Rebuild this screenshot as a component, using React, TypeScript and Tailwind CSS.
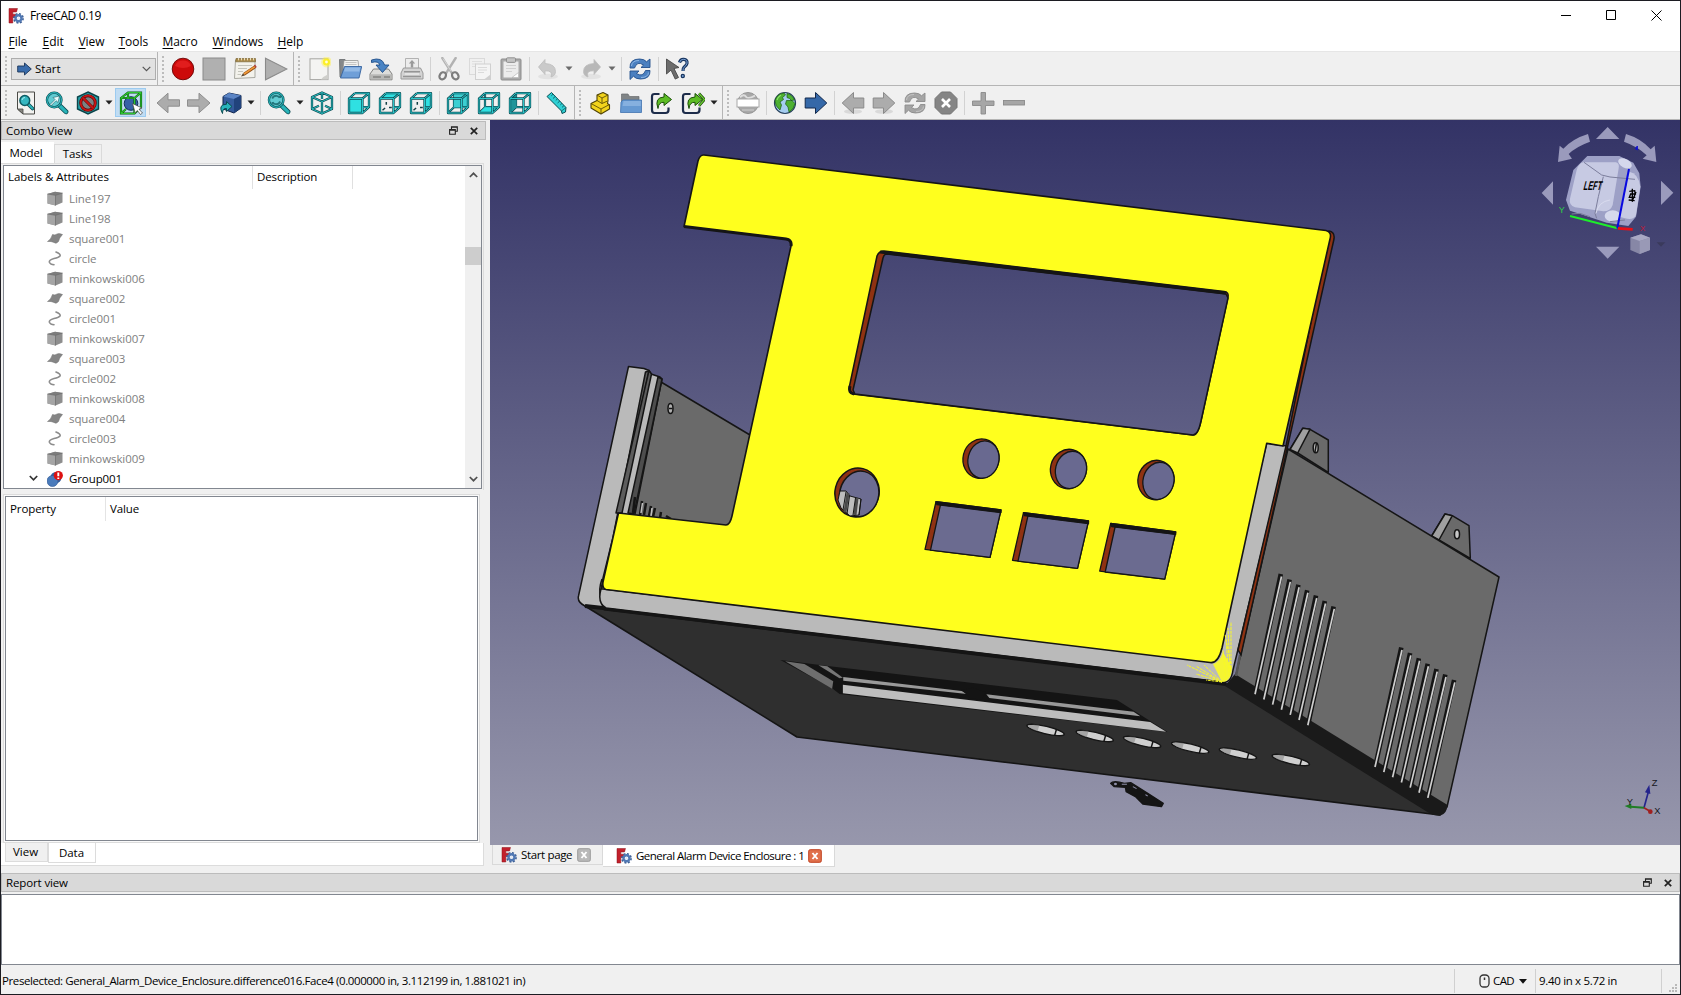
import React from "react";

/* ---------- small drawing helpers ---------- */

type SvgProps = { children: React.ReactNode; size?: number; box?: string };

const Svg = ({ children, size = 24, box = "0 0 24 24" }: SvgProps) => (
  <svg width={size} height={size} viewBox={box} className="block shrink-0" fill="none">
    {children}
  </svg>
);

const FreeCadLogo = () => (
  <Svg size={16} box="0 0 16 16">
    <path d="M1 0.5h8.5l-1 3.5H4.8v2.2h3v3.4h-3V15H1z" fill="#c2202c" stroke="#8a1018" strokeWidth=".5" />
    <circle cx="10.5" cy="10.3" r="4.6" stroke="#3d5f94" strokeWidth="1.6" strokeDasharray="2 1.6" />
    <circle cx="10.5" cy="10.3" r="3" stroke="#5078b4" strokeWidth="2.4" />
    <circle cx="10.5" cy="10.3" r="1.2" fill="#dfe8f5" />
  </Svg>
);

const edges =
  "M2 7.5H15.5V22H2z M8 2.2H22V16.2H15.5 M2 7.5L8 2.2 M15.5 7.5L22 2.2 M15.5 22L22 16.2";
const hidden = "M8 2.2V16.2H15.5 M8 16.2L2 22";

const CubeFrame = ({
  face,
  faceFill = "#2fe0e2",
  back = false,
  ticks = false,
}: {
  face?: string;
  faceFill?: string;
  back?: boolean;
  ticks?: boolean;
}) => (
  <Svg>
    {back && <path d={hidden} stroke="#0c4b52" strokeWidth="2.2" />}
    {back && <path d={hidden} stroke="#2aaeb4" strokeWidth=".9" />}
    {face && <path d={face} fill={faceFill} />}
    {ticks && <path d="M4.5 19.2l2.600-2.200M8.300 11v2.800M11 16.500h2.800" stroke="#123f44" strokeWidth="1.5" />}
    <path d={edges} stroke="#0c4b52" strokeWidth="2.3" strokeLinejoin="round" />
    <path d={edges} stroke="#2cc6ca" strokeWidth="1" />
  </Svg>
);

const faces = {
  front: "M2 7.5H15.5V22H2z",
  top: "M2 7.5L8 2.2H22L15.5 7.5z",
  right: "M15.5 7.5L22 2.2V16.2L15.5 22z",
  rear: "M8 2.2H22V16.2H8z",
  bottom: "M2 22L8 16.2H22L15.5 22z",
  left: "M2 7.5L8 2.2V16.2L2 22z",
};

const IsoCube = () => (
  <Svg>
    {["#0c4b52", "#2cc6ca"].map((c, i) => (
      <path
        key={c}
        d="M12 1.5L22 6V18L12 22.5L2 18V6z M2 6L12 10.5L22 6 M12 10.5V22.5 M12 1.5V8 M2 18L9 14.8 M22 18L15 14.8"
        stroke={c}
        strokeWidth={i ? 0.9 : 2.3}
        strokeLinejoin="round"
      />
    ))}
  </Svg>
);

const Magnifier = ({ inner }: { inner?: React.ReactNode }) => (
  <Svg>
    <path d="M13.5 13.5L21 20.8" stroke="#0c4b52" strokeWidth="4.8" strokeLinecap="round" />
    <path d="M13.5 13.5L21 20.8" stroke="#28b3b8" strokeWidth="3.200" strokeLinecap="round" />
    <circle cx="9.2" cy="9" r="7.3" fill="#62cbd2" stroke="#0c4b52" strokeWidth="2.3" />
    <circle cx="9.2" cy="9" r="7.3" stroke="#28b3b8" strokeWidth="1.2" />
    {inner}
  </Svg>
);

const RedCircle = () => (
  <Svg>
    <circle cx="12" cy="12" r="10.8" fill="#cc0a0a" stroke="#6b0606" strokeWidth=".9" />
    <path d="M4 9a8.6 8.6 0 0 1 16 0q-8 4-16 0z" fill="#ee2a2a" opacity=".6" />
  </Svg>
);
const GreySquare = () => (
  <Svg>
    <rect x="1" y="1" width="22" height="22" fill="#b0b0b0" stroke="#8a8a8a" />
  </Svg>
);
const NotePencil = () => (
  <Svg>
    <path d="M2.5 3H22V20.5L1.500 21.500z" fill="#f3f2ec" stroke="#a0a098" strokeWidth=".9" />
    <path d="M3 1.500H22.500V4.800H2.700z" fill="#a98a4a" stroke="#6e5a2c" strokeWidth=".6" />
    <path d="M5.500 .8v2.500M8.500 .8v2.500M11.500 .8v2.500M14.500 .8v2.500M17.500 .8v2.500M20.500 .8v2.500" stroke="#efe6cc" strokeWidth=".9" />
    <path d="M5 8.5H19M5 11.5H14M5 14.5H10M4.500 17.5H8" stroke="#c4c4bc" />
    <path d="M11 17.2L22.500 9.500" stroke="#8e4a12" strokeWidth="3" />
    <path d="M11 17L22 9.700" stroke="#f09a3a" strokeWidth="1.600" />
    <path d="M8 19.500l2-3.200 1.900 2.300z" fill="#5a4630" />
    <path d="M21.500 8l1.600 2.400" stroke="#b04040" strokeWidth="1.600" />
  </Svg>
);
const Play = () => (
  <Svg>
    <path d="M1.5 1.2L23 12L1.5 22.8z" fill="#b0b0b0" stroke="#8a8a8a" strokeWidth="1.1" />
  </Svg>
);
const NewDoc = () => (
  <Svg>
    <rect x="3" y="1.8" width="18" height="20.8" fill="#f4f4f2" stroke="#a6a6a2" />
    <path d="M14 22.5q2-3 6.8-5V22.5z" fill="#cfcfcb" />
    <circle cx="19.5" cy="5" r="5.4" fill="#fff04a" opacity=".45" />
    <circle cx="19.5" cy="5" r="3.6" fill="#fdf01c" opacity=".9" />
    <circle cx="19.5" cy="5" r="1.4" fill="#fffde0" />
  </Svg>
);
const OpenDoc = () => (
  <Svg>
    <path d="M1.5 2.500H7l1.5 1.8H18V20H2z" fill="#85888a" stroke="#66696b" strokeWidth=".8" />
    <path d="M6 3.500H20l1 9H5z" fill="#f2f2f0" stroke="#8d8d8b" strokeWidth=".7" />
    <path d="M7.5 5.500h11M7.5 7.500h11" stroke="#c5c5c3" />
    <path d="M6.500 9.500h17.200L21 21H2.500z" fill="#6f9fd8" stroke="#35639f" strokeWidth=".9" />
    <path d="M7.200 10.6H22.300l-1 4H6z" fill="#93bae6" />
  </Svg>
);
const SaveDoc = () => (
  <Svg>
    <path d="M4.5 12h15L23 17v5.8H1V17z" fill="#dcdcda" stroke="#767674" strokeWidth=".9" />
    <path d="M1.4 17.3H22.6V22.4H1.4z" fill="#b7b7b5" />
    <path d="M4 20h8M15 20h6" stroke="#858583" strokeWidth="1.3" />
    <path d="M2.500 3Q13-.5 15.6 8H20L13.5 15.5L7 8h4Q9.500 3.500 2.500 5.500z" fill="#4a84c4" stroke="#1f4e88" strokeWidth=".9" />
  </Svg>
);
const PrintDoc = () => (
  <Svg>
    <path d="M5.5 1.5h13V12h-13z" fill="#ececec" stroke="#aaa" strokeWidth=".9" />
    <path d="M12 3l3.2 3.6h-2v4h-2.4v-4h-2z" fill="#9a9a9a" />
    <path d="M3.5 11h17L23 16v6H1v-6z" fill="#d3d3d3" stroke="#989898" strokeWidth="1" />
    <path d="M4 14.800h16M3 19.500h18" stroke="#959595" strokeWidth="1.4" />
    <path d="M5 17h14" stroke="#f4f4f4" />
  </Svg>
);
const Cut = () => (
  <Svg>
    <path d="M5.3 1L15 16.4M18.7 1L9 16.4" stroke="#b2b2b2" strokeWidth="2.4" strokeLinecap="round" />
    <path d="M6 1.5L14 14" stroke="#dedede" strokeWidth=".8" />
    <ellipse cx="5.7" cy="18.8" rx="3" ry="3.8" transform="rotate(35 5.7 18.8)" stroke="#7d7d7d" strokeWidth="2.2" />
    <ellipse cx="18.3" cy="18.8" rx="3" ry="3.8" transform="rotate(-35 18.3 18.8)" stroke="#7d7d7d" strokeWidth="2.2" />
  </Svg>
);
const Copy = () => (
  <Svg>
    <rect x="1.5" y="1.5" width="15" height="16" fill="#f0f0f0" stroke="#dadada" />
    <path d="M4 4.5h10M4 7h4M4 9.500h3" stroke="#dedede" />
    <rect x="7.500" y="7" width="15" height="15.5" fill="#f4f4f4" stroke="#d0d0d0" />
    <path d="M10 10.500h9M10 13h9M10 15.500h6" stroke="#dadada" />
    <path d="M16 22.500l6.500-5v5z" fill="#cfcfcf" />
  </Svg>
);
const Paste = () => (
  <Svg>
    <rect x="2" y="2" width="20" height="21" rx="1" fill="#aaa" stroke="#8d8d8d" />
    <rect x="4.500" y="4.500" width="15" height="16" fill="#ececec" />
    <rect x="7.500" y=".8" width="9" height="4.600" rx="1" fill="#c4c4c4" stroke="#8a8a8a" strokeWidth=".9" />
    <path d="M7 8.500h10M7 11.500h10M7 14.500h6" stroke="#d0d0d0" />
    <path d="M13 20.500l6.500-5v5z" fill="#fff" stroke="#aaa" strokeWidth=".6" />
  </Svg>
);
const Undo = ({ flip = false }: { flip?: boolean }) => (
  <Svg>
    <ellipse cx="12" cy="19.500" rx="10" ry="2.800" fill="#e2e2e2" />
    <g transform={flip ? "translate(24 0) scale(-1 1)" : ""}>
      <path d="M9 2.500v4q10.500 .5 10.500 8 0 4-4.500 5.500 2.500-6.500-6-6.200V17.500L2.500 10z" fill={flip ? "#b8b8b8" : "#cacaca"} stroke="#bdbdbd" strokeWidth=".8" />
    </g>
  </Svg>
);
const Reload = ({ grey = false }: { grey?: boolean }) => (
  <Svg>
    <path
      d="M2 11Q1.500 2 11.500 2q5 0 7 2.800L22 2v8.500h-9L15.600 8Q9 3.600 6.500 11z M22 13.500q.5 8.500-9.500 8.500-5 0-7-2.800L2 22.500V14h9l-2.600 2.500Q15 20.500 17.500 13.500z"
      fill={grey ? "#a5a5a5" : "#4b80c0"}
      stroke={grey ? "#8c8c8c" : "#24508c"}
      strokeWidth=".9"
    />
    <path d="M3.500 9Q4 3.500 11 3.500M20.500 15.500Q20 20.500 13 20.500" stroke={grey ? "#c4c4c4" : "#8db6e4"} strokeWidth="1" />
  </Svg>
);
const WhatsThis = () => (
  <Svg>
    <path d="M1.500 2L14 10.500l-5 1 4.500 9-3.300 1.600-4.200-9L1.500 17z" fill="#6c6c6c" stroke="#3d3d3d" strokeWidth=".8" />
    <path d="M14.500 5.500q1-3.500 4.300-3.200 3.700.4 3.200 4-.5 2.200-3 4-1 .8-1 3.700" stroke="#16345f" strokeWidth="3.200" />
    <path d="M14.500 5.500q1-3.500 4.300-3.200 3.700.4 3.200 4-.5 2.200-3 4-1 .8-1 3.700" stroke="#7ca3d6" strokeWidth="1" />
    <circle cx="17.800" cy="19" r="2.200" fill="#16345f" />
    <circle cx="17.800" cy="19" r=".9" fill="#7ca3d6" />
  </Svg>
);

const FitAll = () => (
  <Svg>
    <path d="M3.500 1H20.500V23H9L3.500 18z" fill="#f2f2f0" stroke="#4a4a46" strokeWidth="1" />
    <path d="M3.500 18H9v5z" fill="#85857f" stroke="#4a4a46" strokeWidth=".8" />
    <path d="M13.500 12.500L18.500 17.500" stroke="#0c4b52" strokeWidth="3.600" strokeLinecap="round" />
    <path d="M13.500 12.500L18.500 17.500" stroke="#28b3b8" strokeWidth="2" strokeLinecap="round" />
    <circle cx="10.800" cy="9.500" r="4.900" fill="#34b6c0" stroke="#0c5a62" strokeWidth="1.500" />
    <path d="M8 9a3 3 0 0 1 3-2.500" stroke="#a5ecef" />
  </Svg>
);
const FitSelection = () => (
  <Magnifier inner={<path d="M5 13.500l5-5-2-2 6.500-1.500-1.500 6.500-2-1.800-5 5z" fill="#e9fbfb" stroke="#1d6268" strokeWidth=".6" />} />
);
const SyncView = () => (
  <Magnifier inner={<path d="M5.200 7.500q1.500-3 4.500-2.700 1.800.2 3 2M13.200 7v-2.500M13.200 10.500q-1.500 3-4.500 2.700-1.800-.2-3-2M5.500 11v2.500" stroke="#24777d" strokeWidth="1.800" />} />
);
const DrawStyle = () => (
  <Svg>
    <path d="M12 1l10.500 5v12L12 23 1.500 18V6z" fill="#26a4ac" stroke="#0b454b" strokeWidth="1.400" />
    <path d="M12 3.500L19 7v9l-7 4-7-4V7z" fill="#7a8284" />
    <circle cx="12" cy="12" r="7.300" stroke="#5c0606" strokeWidth="3" />
    <circle cx="12" cy="12" r="7.300" stroke="#c91616" strokeWidth="1.800" />
    <path d="M7 7L17 17" stroke="#5c0606" strokeWidth="3" />
    <path d="M7 7L17 17" stroke="#c91616" strokeWidth="1.800" />
  </Svg>
);
const BoxSelect = () => (
  <Svg>
    <circle cx="12" cy="12.500" r="6.800" fill="#3760a6" stroke="#122a5c" />
    <path d="M2 7L9 1.500H22V16L15.500 22.500H2z M2 7H15.500V22.500M15.500 7L22 1.500M9 1.500V8M2 22.500l5-4.500" stroke="#0b5a10" strokeWidth="2.200" />
    <path d="M2 7L9 1.500H22V16L15.500 22.500H2z M2 7H15.500V22.500M15.500 7L22 1.500M9 1.500V8M2 22.500l5-4.500" stroke="#2fc52f" strokeWidth="1.100" />
    <path d="M13.500 12.500l9.500 4.500-3 1.200 3.500 3.800-2 1.500-3.200-4-2 2.500z" fill="#fff" stroke="#444" strokeWidth=".7" />
  </Svg>
);
const ThinArrow = ({ flip = false }: { flip?: boolean }) => (
  <Svg>
    <path
      transform={flip ? "translate(24 0) scale(-1 1)" : ""}
      d="M1 12L12 2.200V8.800H23.500V15.200H12V21.800z"
      fill="#acacac"
      stroke="#8f8f8f"
    />
  </Svg>
);
const FatArrow = ({ flip = false, blue = false }: { flip?: boolean; blue?: boolean }) => (
  <Svg>
    {!blue && <ellipse cx="12" cy="20.500" rx="9" ry="2.300" fill="#d9d9d9" />}
    <path
      transform={flip ? "translate(24 0) scale(-1 1)" : ""}
      d="M1.200 12L12.500 1.500V7H22.800V17H12.500V22.500z"
      fill={blue ? "#3568a8" : "#acacac"}
      stroke={blue ? "#12294c" : "#8a8a8a"}
      strokeWidth="1"
    />
  </Svg>
);
const LinkCube = () => (
  <Svg>
    <path d="M5 5.500L11 2 23 4.500V17L16 22 5 18z" fill="#345b9c" stroke="#10244a" />
    <path d="M5 5.500L11 2 23 4.500 16 8z" fill="#5b84c4" />
    <path d="M16 8L23 4.500V17L16 22z" fill="#21437c" />
    <path d="M8.500 10.500L14 15.500 8.500 20.500V17.500Q4.500 17 4.500 22.500-.5 13.500 8.500 13.200z" fill="#27b3ba" stroke="#0b4a50" strokeWidth="1" />
  </Svg>
);
const Ruler = () => (
  <Svg>
    <path d="M2 5.500L6.500 1.500 21 16.500 20.500 21 17 22.500 16.500 20z" fill="#2fd0d4" stroke="#0b4f55" strokeWidth="1" strokeLinejoin="round" />
    <path d="M16.500 20L21 16.500" stroke="#0b4f55" strokeWidth=".7" />
    <path d="M8 3.200L6.300 4.800M10.200 5.500L8 7.500M12.500 7.800L10.800 9.400M14.800 10L12.600 12M17 12.300L15.300 13.900M19 14.500L17 16.400" stroke="#0b5f65" strokeWidth=".9" />
  </Svg>
);
const PartIcon = () => (
  <Svg>
    <path d="M3 12.500L9 9.500V4l6-2.500 5 2.500v6l-.5 2.500 2 1.500V18l-8.500 5-10-6z" fill="#f2d31c" stroke="#4f4306" strokeWidth="1.100" strokeLinejoin="round" />
    <path d="M9 4l5 3 6-3M14 7v5.500l-5-3M3 12.500l10 5.500 8.500-4.500M13 18v5M14 12.500l5.500-2.500" stroke="#5d4f08" strokeWidth=".9" />
  </Svg>
);
const FolderIcon = () => (
  <Svg>
    <path d="M2.500 3H9l1.500 2.500H20V18H2.500z" fill="#808486" stroke="#696c6e" strokeWidth=".7" />
    <path d="M4 9H22.500V21.500H1.500L2 11z" fill="#6699d2" stroke="#4174b0" strokeWidth=".8" />
    <path d="M4.500 10H21.800v5H3.500z" fill="#86b0df" />
  </Svg>
);
const ExportIcon = ({ two = false }: { two?: boolean }) => (
  <Svg>
    <path d="M9.500 3H4.500q-2.500 0-2.500 2.500V19q0 3 2.500 3H15.500q3 0 3-3v-2.500" stroke="#1d2c4a" strokeWidth="2.200" />
    <path d="M14 2.500L21.500 8.500 14 14.500V11.300Q8.500 11 8 17.500 4 6.500 14 6z" fill="#5cbc24" stroke="#1b4f08" strokeWidth="1" />
    {two && <path d="M18 2.500l5.500 6-5.500 6.300" stroke="#1b4f08" strokeWidth="2.600" />}
    {two && <path d="M18 2.500l5.500 6-5.500 6.300" stroke="#6fd034" strokeWidth="1.200" />}
  </Svg>
);
const WebSheet = () => (
  <Svg>
    <circle cx="12" cy="12" r="10.500" fill="#a8a8a8" stroke="#969696" />
    <path d="M4 6.200q4-3.500 6-.5t9-1" stroke="#dedede" strokeWidth="2" />
    <rect x="1" y="8" width="22" height="8" fill="#fff" stroke="#a8a8a8" />
    <path d="M6 19h12" stroke="#c8c8c8" strokeWidth="1.300" />
  </Svg>
);
const Globe = () => (
  <Svg>
    <circle cx="12" cy="12" r="10.500" fill="#a5cdf0" stroke="#27405c" strokeWidth="1.200" />
    <path d="M3 7Q6 2 11 2l1.500 2-3 2.500 1 2L7 11l1.500 3L7 19q-5-4-5-9z" fill="#4db032" stroke="#1d5c12" strokeWidth=".7" />
    <path d="M14 2.500q5 1 7.500 6.500l-3 .5-2-2-2.500-1zM13.500 9.500l5.500 0 3 3q-1 6-6 8.500l-1-5-2.500-3z" fill="#4db032" stroke="#1d5c12" strokeWidth=".7" />
    <path d="M8 4q-3 2-4 5" stroke="#8be06a" strokeWidth="1.200" />
  </Svg>
);
const StopOct = () => (
  <Svg>
    <path d="M7.500 1h9L23 7.500v9L16.500 23h-9L1 16.500v-9z" fill="#858585" stroke="#757575" />
    <path d="M8 8l8 8M16 8l-8 8" stroke="#fff" strokeWidth="2.600" />
  </Svg>
);
const Plus = () => (
  <Svg>
    <path d="M10 1.500h4.500V10H23v4.500h-8.500V23H10v-8.500H1.500V10H10z" fill="#a6a6a6" stroke="#8a8a8a" strokeWidth=".9" />
  </Svg>
);
const Minus = () => (
  <Svg>
    <rect x="1.500" y="9.500" width="21" height="4.500" fill="#a6a6a6" stroke="#8a8a8a" strokeWidth=".9" />
  </Svg>
);

/* ---------- toolbar parts ---------- */

const Tool = ({ children, active = false }: { children: React.ReactNode; active?: boolean }) => (
  <button
    className={
      active
        ? "flex h-[29px] w-[31px] shrink-0 items-center justify-center border border-[#9ccbf0] bg-[#c0dcf3]"
        : "flex h-[29px] w-[31px] shrink-0 items-center justify-center"
    }
  >
    {children}
  </button>
);
const Drop = ({ dim = false }: { dim?: boolean }) => (
  <span className="flex w-3 shrink-0 justify-center">
    <svg width="8" height="5" viewBox="0 0 8 5">
      <path d="M.5 .5h7L4 4.500z" fill={dim ? "#6a6a6a" : "#222"} />
    </svg>
  </span>
);
const Sep = () => (
  <span className="flex w-1.5 shrink-0 justify-center">
    <span className="h-6 w-px bg-[#d2d2d2]" />
  </span>
);
const Handle = () => (
  <svg width="4" height="28" viewBox="0 0 4 28" className="shrink-0">
    <path d="M2 1V28" stroke="#bcbcbc" strokeWidth="2" strokeDasharray="2 2" />
  </svg>
);
const ChevronDown = () => (
  <svg width="9" height="6" viewBox="0 0 9 6" fill="none">
    <path d="M.7 .8L4.500 4.600 8.300 .8" stroke="#555" strokeWidth="1.200" />
  </svg>
);

const DockButtons = () => (
  <span className="flex items-center gap-[12px]">
    <svg width="9" height="9" viewBox="0 0 9 9" fill="none" stroke="#222">
      <path d="M2.500 3V.8H8.300V5.300H6.500M2.500 1.300H8.300M.6 3.500H6.300V8.300H.6zM.6 4.200H6.300" strokeWidth="1.100" />
    </svg>
    <svg width="8" height="8" viewBox="0 0 8 8">
      <path d="M.8 .8L7.200 7.200M7.200 .8L.8 7.200" stroke="#222" strokeWidth="1.700" />
    </svg>
  </span>
);

/* ---------- model tree ---------- */

type Kind = "solid" | "face" | "wire";
const tree: [Kind, string][] = [
  ["solid", "Line197"],
  ["solid", "Line198"],
  ["face", "square001"],
  ["wire", "circle"],
  ["solid", "minkowski006"],
  ["face", "square002"],
  ["wire", "circle001"],
  ["solid", "minkowski007"],
  ["face", "square003"],
  ["wire", "circle002"],
  ["solid", "minkowski008"],
  ["face", "square004"],
  ["wire", "circle003"],
  ["solid", "minkowski009"],
];

const KindIcon = ({ kind }: { kind: Kind }) => (
  <Svg size={16} box="0 0 16 16">
    {kind === "solid" && (
      <>
        <path d="M.5 3L8 .8 15.500 2V11.500L8.500 14.500 .5 12.500z" fill="#8e8e8e" />
        <path d="M.5 3L8 .8 15.500 2 8.500 4.300z" fill="#7d7d7d" />
        <path d="M.5 3L8.500 4.300V14.500L.5 12.500z" fill="#a5a5a5" />
        <path d="M8.500 4.300V14.500M.5 3L8.500 4.300 15.500 2" stroke="#6b6b6b" strokeWidth=".7" />
      </>
    )}
    {kind === "face" && (
      <path d="M5.500 3.500Q8 4.500 10 3 12 2 15.500 3.500 12 7 11.500 10.500 9 13.500 7 11.500 4 10 .5 10.500 4 8.500 5.500 3.500z" fill="#858585" stroke="#6f6f6f" strokeWidth=".5" />
    )}
    {kind === "wire" && (
      <path d="M9 1Q14 3 13 5 12 6.500 7 7.500 1.500 9 2.500 11.500 3.500 13.500 7 13.800" stroke="#8c8c8c" strokeWidth="1.600" strokeLinecap="round" />
    )}
  </Svg>
);

const ComboView = () => (
  <section className="flex w-[489px] shrink-0 flex-col">
    <header className="mr-[4px] mt-px flex h-[19px] items-center justify-between border border-[#bcbcbc] bg-[#d9d9d9] pl-1 pr-[7px]">
      <span className="tracking-[-0.05px]">Combo View</span>
      <DockButtons />
    </header>
    <nav className="mt-[2px] flex h-[21px] items-end">
      <div className="flex h-[21px] w-[53px] items-center justify-center bg-white pr-[3px] tracking-[-0.15px]">Model</div>
      <div className="flex h-[19px] w-[48px] items-center justify-center border border-b-0 border-[#dadada] bg-[#f0f0f0] pr-px">Tasks</div>
    </nav>
    <div className="mr-[6px] flex h-[327px] border-r border-t border-[#dcdcdc] pl-[2px] pt-px">
      <div className="flex h-[324px] w-[479px] border border-[#828790] bg-white">
        <div className="flex min-w-0 flex-1 flex-col overflow-hidden">
          <div className="flex h-[23px] shrink-0">
            <span className="flex w-[249px] items-center border-r border-[#e0e0e0] pb-[2px] pl-1 tracking-[-0.05px]">Labels &amp; Attributes</span>
            <span className="flex w-[100px] items-center border-r border-[#e0e0e0] pb-[2px] pl-1 tracking-[-0.1px]">Description</span>
          </div>
          {tree.map(([kind, label]) => (
            <div key={label} className="flex h-5 shrink-0 items-center gap-[6px] pl-[43px] tracking-[-0.08px] text-[#808080]">
              <KindIcon kind={kind} />
              <span>{label}</span>
            </div>
          ))}
          <div className="flex h-5 shrink-0 items-center pb-px pl-[25px]">
            <svg width="9" height="7" viewBox="0 0 9 7" fill="none">
              <path d="M.8 1L4.500 4.800 8.200 1" stroke="#333" strokeWidth="1.700" />
            </svg>
            <span className="ml-[9px] mr-[6px]">
              <Svg size={16} box="0 0 16 16">
                <circle cx="9" cy="6.500" r="5.500" fill="#345f9e" />
                <circle cx="5.500" cy="10" r="5.500" fill="#4a7bbb" stroke="#2e5590" strokeWidth=".6" />
                <circle cx="11.300" cy="4.600" r="4.600" fill="#dd1111" />
                <path d="M11.300 1.500V5.300M11.300 6.500V8" stroke="#fff" strokeWidth="1.900" />
              </Svg>
            </span>
            <span className="tracking-[-0.1px]">Group001</span>
          </div>
        </div>
        <div className="flex w-4 flex-col items-center justify-between bg-[#f0f0f0] py-[6px]">
          <svg width="9" height="6" viewBox="0 0 9 6" fill="none">
            <path d="M.8 5L4.500 1.300 8.200 5" stroke="#505050" strokeWidth="1.700" />
          </svg>
          <div className="mb-[208px] mt-[66px] h-[18px] w-full bg-[#cdcdcd]" />
          <svg width="9" height="6" viewBox="0 0 9 6" fill="none">
            <path d="M.8 1L4.500 4.700 8.200 1" stroke="#505050" strokeWidth="1.700" />
          </svg>
        </div>
      </div>
    </div>
    <div className="ml-[2px] mr-[10px] mt-[4px] flex h-[349px] flex-col border border-[#dcdcdc] bg-[#fafafa] pl-px pr-px pt-px">
      <div className="flex h-[345px] items-start border border-[#828790] bg-white">
        <span className="flex h-6 w-[100px] items-center border-r border-[#e4e4e4] pb-px pl-1 tracking-[-0.1px]">Property</span>
        <span className="flex h-6 items-center pb-px pl-1 tracking-[-0.1px]">Value</span>
      </div>
    </div>
    <nav className="mr-[6px] flex h-[23px] items-start border-b border-r border-[#dcdcdc] bg-white pl-1">
      <div className="flex h-[19px] w-[43px] items-center justify-center border border-t-0 border-[#dcdcdc] bg-[#f0f0f0] pr-[2px]">View</div>
      <div className="flex h-[20px] w-[48px] items-center justify-center border border-t-0 border-[#dcdcdc] bg-white pr-px">Data</div>
    </nav>
  </section>
);

/* ---------- 3D viewport ---------- */

const ink = "#151515";
const sky = "url(#sky)";
const slots = [0, 1, 2, 3, 4, 5, 6];

const Vents = ({ x1, y1, x2, y2 }: { x1: number; y1: number; x2: number; y2: number }) => (
  <g>
    {slots.map((i) => {
      const dx = i * 8.800;
      const ty = y1 + i * 5.400;
      const by = y2 + i * 5.150;
      return (
        <g key={i}>
          <path d={`M${x1 + dx + 0.300} ${ty}L${x2 + dx + 0.800} ${by - 2}`} stroke={ink} strokeWidth="4.600" />
          <path d={`M${x1 + dx + 1} ${ty + 2.500}L${x2 + dx} ${by + 1}`} stroke="#cfcfcf" strokeWidth="1.700" />
        </g>
      );
    })}
  </g>
);

const RoundHole = ({ cx, cy }: { cx: number; cy: number }) => (
  <g transform={`rotate(14 ${cx} ${cy})`} stroke={ink} strokeWidth="1.300">
    <ellipse cx={cx} cy={cy} rx="18" ry="19.800" fill="#8f3212" />
    <ellipse cx={cx + 2.600} cy={cy + 0.300} rx="15.400" ry="18.800" fill="#696990" />
  </g>
);

const SquareHole = ({ x, y }: { x: number; y: number }) => (
  <g transform={`translate(${x} ${y})`} stroke={ink} strokeWidth="1.300" strokeLinejoin="round">
    <path d="M0 0L65 8.300 54 55.600 -11 47.600z" fill="#8f3212" />
    <path d="M4.500 3L64.500 10.500 54 55.600 -5.500 48.500z" fill="#6b6b90" />
    <path d="M0 0L65 8.300V10.800L1 3z" fill={ink} />
  </g>
);

const NavigationCube = () => (
  <g transform="translate(1380 0) scale(.33333)">
    <g fill="#9a9abc">
      <path d="M683 381L718 417H648z M648 740H718L683 776z M519 544V614L485 579z M843 542V615L880 578z" />
      <path d="M624 402L630 425Q588 440 566 462L576 476 534 486 539 437 550 446Q578 416 624 402z" />
      <path d="M738 402L732 425Q774 440 800 466L788 476 829 486 824 437 812 448Q784 416 738 402z" />
    </g>
    <path d="M766 446L772 438V450z" fill="#1010d0" stroke="#1010d0" strokeWidth="3" />
    <path d="M622 468L718 468 760 488 778 520 782 560 768 650 745 678 680 668 610 645 570 632 558 600 580 510z" fill="#9da0c6" />
    <path d="M610 487H708Q719 490 716 505L698 615Q692 634 670 634L585 622Q566 615 570 596L590 510Q596 490 610 487z" fill="#c7cae3" />
    <path d="M748 515Q775 520 781 560L768 645Q760 662 735 655L718 650z" fill="#c7cae3" />
    <ellipse cx="735" cy="490" rx="22" ry="13" transform="rotate(28 735 490)" fill="#d5d8ec" />
    <ellipse cx="698" cy="648" rx="24" ry="17" fill="#d5d8ec" />
    <path d="M612 487L665 525 690 531 765 538 M670 530L655 590 645 640 650 655 M575 642L600 640 630 650 M690 665L735 660" stroke="#7b7d9c" strokeWidth="3" fill="none" />
    <path d="M648 640Q655 605 690 600" stroke="#d9dbee" strokeWidth="3" fill="none" />
    <text transform="translate(610 570) skewX(-8)" fontSize="38" fontWeight="700" fontStyle="italic" textLength="54" lengthAdjust="spacingAndGlyphs" fill="#000" fontFamily="Liberation Sans, sans-serif">LEFT</text>
    <path d="M748 574L764 572 766 582 752 582 748 592 766 592M746 600L764 602M757 566V606M768 576L758 600" stroke="#000" strokeWidth="4" fill="none" />
    <path d="M570 648L710 684" stroke="#1dee2a" strokeWidth="6" />
    <path d="M712 684L747 507" stroke="#0808e0" strokeWidth="6" />
    <path d="M714 685L758 688" stroke="#e81018" strokeWidth="8" />
    <text x="536" y="638" fontSize="27" fill="#2cd048" fontFamily="Liberation Sans, sans-serif">Y</text>
    <text x="780" y="693" fontSize="24" fill="#c01838" fontFamily="Liberation Sans, sans-serif">X</text>
    <path d="M751 713L783 703 810 713V750L779 762 751 750z" fill="#8787a6" />
    <path d="M751 713L783 703 810 713 779 723z" fill="#a9a9c4" />
    <path d="M779 723L810 713V750L779 762z" fill="#9999b6" />
    <path d="M830 727H856L843 740z" fill="#3a3a5c" />
  </g>
);

const AxisCross = () => (
  <g transform="translate(1420 760) scale(.33333)" fontFamily="Liberation Sans, sans-serif" fontSize="28" fill="#16161c">
    <path d="M672 143L686 92" stroke="#24248c" strokeWidth="5" />
    <path d="M688 74L691 102 675 97z" fill="#24248c" />
    <path d="M672 143L632 140" stroke="#1f7d26" strokeWidth="6" />
    <path d="M614 138L634 131V147z" fill="#1f7d26" />
    <path d="M672 143L690 154" stroke="#a02020" strokeWidth="5" />
    <circle cx="691" cy="155" r="7" fill="#a02020" />
    <text x="695" y="78">Z</text>
    <text x="620" y="136">Y</text>
    <text x="703" y="161">X</text>
  </g>
);

const Viewport = () => (
  <svg width="1190" height="725" viewBox="490 120 1190 725" className="block">
    <defs>
      <linearGradient id="sky" gradientUnits="userSpaceOnUse" x1="0" y1="120" x2="0" y2="845">
        <stop offset="0" stopColor="#333366" />
        <stop offset="1" stopColor="#9797ac" />
      </linearGradient>
    </defs>
    <rect x="490" y="120" width="1190" height="725" fill={sky} />

    {/* left wall */}
    <g stroke={ink} strokeWidth="1.500" strokeLinejoin="round">
      <path d="M655 380L661 382 750 435 735 530 618 516z" fill="#6a6a6a" />
      <path d="M628.500 366.500L644 368.500 649 370.500 651 374 660 377 662 379 635 514 603 608 585 606Q577 602 578.500 596z" fill="#bababa" />
      <path d="M649 371L645.500 372 604 583 601 590 603 578 619 513z" fill="#5d5d5d" />
      <path d="M649 370.500L651.500 374 622 513 616 513z" fill="#5d5d5d" />
      <path d="M658 377L662 379 634 514 628 513z" fill="#4d4d4d" />
      <path d="M602 579Q598 590 601 598L603 608" fill="none" />
      <ellipse cx="670.500" cy="408.500" rx="2.500" ry="5" fill="#b0b0b0" />
      <path d="M669 408.500h3.500" />
      <path d="M635 497L633 513M642 501L640 515M646 503L644 515M651 506L649 516M655 508L653 517M661 512L660 518M666 516L671 519" strokeWidth="2.500" />
      <path d="M642.500 503L641 513M652 508L651 516" stroke="#c0c0c0" strokeWidth="1.500" />
    </g>

    {/* right wall with mounting ears */}
    <g stroke={ink} strokeWidth="1.500" strokeLinejoin="round">
      <path d="M1302.700 428.300L1310 429.300 1328.300 440V472.300L1297.700 453 1290 449.500z" fill="#6a6a6a" />
      <path d="M1302.700 428.300L1310 429.300 1297.700 453 1290 449.500z" fill="#a0a0a0" />
      <ellipse cx="1315.700" cy="447.700" rx="2.500" ry="5" fill="#b8b8b8" />
      <path d="M1316.500 443L1315 452" />
      <path d="M1445 514L1452.300 515.700 1469 525.700 1470.300 558.300 1439 540 1431.700 536z" fill="#6a6a6a" />
      <path d="M1445 514L1452.300 515.700 1439 540 1431.700 536z" fill="#a0a0a0" />
      <ellipse cx="1457" cy="534.300" rx="2.500" ry="4.500" fill="#c8c8c8" />
      <path d="M1288 449L1499 577 1447 807 1235 679z" fill="#6a6a6a" />
    </g>

    {/* underside */}
    <path d="M585 606L603 608 1226 684 1235 682 1440 806 1440 815 797 737z" fill="#2f2f2f" stroke={ink} strokeWidth="1.600" strokeLinejoin="round" />
    <path d="M585 606L603 608 1226 684" stroke={ink} strokeWidth="4" fill="none" />
    <path d="M1235 674L1447.500 805Q1447 814 1440 815.800 1434 816 1429 813L1225 686z" fill="#1a1a1a" />
    <Vents x1={1280.500} y1={574} x2={1255} y2={693.300} />
    <Vents x1={1401} y1={647.500} x2={1375} y2={766} />

    <g transform="translate(760 640) scale(.3699 .33333)">
      <path d="M55 60L200 80 965 180 1102 276 215 162 195 145z" fill="#141414" />
      <path d="M68 64L120 72 198 124 195 146z" fill="#6e6e6e" />
      <path d="M158 76L182 79 224 113 215 115z" fill="#777" />
      <path d="M225 111L545 153 560 162 225 122z" fill="#999" />
      <path d="M612 163L1010 215 1028 229 620 174z" fill="#999" />
      <path d="M224 134L1055 246 1098 275 224 160z" fill="#bdbdbd" />
      <path d="M545 150L575 143 610 156 600 178 570 176z" fill="#141414" />
      {[[772, 270], [905, 288], [1033, 306], [1163, 323], [1292, 341], [1435, 360]].map(([x, y]) => (
        <g key={x} transform={`translate(${x} ${y}) rotate(15)`}>
          <ellipse rx="52" ry="11" fill="#cfcfcf" stroke={ink} strokeWidth="4" />
          <path d="M-50 0Q-35-9-20-9V9Q-38 9-50 0z" fill="#888" opacity=".6" />
          <path d="M28-9V10" stroke={ink} strokeWidth="4" />
        </g>
      ))}
      <path d="M948 430Q955 420 985 430L1002 428 1048 460 1090 490 1085 500 1035 492 1015 470 990 455 988 442 958 440z" fill={ink} stroke={ink} strokeWidth="4" strokeLinejoin="round" />
      <circle cx="961" cy="432" r="4" fill="#8e8ea8" />
      <path d="M978 433H992M1008 440L1018 446M1042 464L1048 468" stroke="#8e8ea8" strokeWidth="3" />
    </g>

    {/* light bezel */}
    <g stroke={ink} strokeWidth="1.500" strokeLinejoin="round">
      <path d="M603 589L1213 661 1266.700 443.300 1287 446 1233 670Q1231 684 1222 682L606 608Q597 603 601 589z" fill="#bababa" />
      <path d="M604 609L1222 683" strokeWidth="3" />
      <path d="M1240 655L1236 676" strokeWidth="2.500" stroke="#555" />
    </g>

    {/* brown side of the highlighted plate */}
    <path d="M1329 231Q1335 232 1334 239L1241 655 1238 650 1286 446z" fill="#8f3212" stroke={ink} strokeWidth="1.500" />

    {/* highlighted plate */}
    <path
      d="M704 155L1326 230.500Q1332 232 1330 239L1283 446 1266.700 443.300 1222 648Q1218 664 1210 662.500L606 589.500Q602 588 603 582L618.500 513 726 525Q730 525 732 516L791 246Q792 240 786 239L684 226.500 698 161Q700 154.500 704 155z"
      fill="#ffff1e"
      stroke={ink}
      strokeWidth="1.600"
      strokeLinejoin="round"
    />
    <path d="M684 226.500L786 239Q792 240 791 246" stroke={ink} strokeWidth="3" fill="none" />

    {/* highlight facets on the rounded bezel corner */}
    <path d="M1213 664Q1220 662 1223 652L1232 668Q1231 682 1222 682z" fill="#fcfc24" opacity=".9" />
    <path
      d="M1222 682L1187 665M1222 682L1196 666M1222 682L1204 665M1222 682L1196 674M1222 682L1206 680M1226 680L1223 650M1229 676L1226 640M1230 672L1228 628M1231 668L1231 622M1231 664L1225 634"
      stroke="#fafa24"
      strokeWidth="1"
      strokeDasharray="3 .8"
    />

    {/* plate cut-outs */}
    <g stroke={ink} strokeWidth="1.500" strokeLinejoin="round">
      <path d="M884 251L1224 291.500Q1229 292 1228 297L1201 421Q1198 435 1193 435L853 394Q848 392 849.500 386L877 256Q879 251 884 251z" fill="#8f3212" />
      <path d="M887 254L1226 294 1228 298 1201 421Q1198 435 1193 435L855 394 853 390 883 258Q884 254 887 254z" fill={sky} />
      <path d="M880 252L1226 293" strokeWidth="3.200" />
      <path d="M850 386Q848 393 854 394" strokeWidth="3" fill="none" />
    </g>
    <g transform="rotate(14 857.500 492.500)" stroke={ink} strokeWidth="1.500">
      <ellipse cx="857" cy="492.500" rx="22" ry="24.500" fill="#8f3212" />
      <ellipse cx="859.500" cy="493.500" rx="19.500" ry="23" fill="#6d6d92" />
    </g>
    <path d="M840 491L846 491 850 496 861 499 859 515 850 516 841 508 838 500z" fill="#bdbdbd" stroke={ink} />
    <path d="M848 493L845 512M857 498L855 515" stroke="#4a4a4a" strokeWidth="3" />
    <path d="M846 492L843 510M849.500 496L847 514M855.500 498L853 515M861 499L859 515" stroke={ink} strokeWidth="1" />
    <RoundHole cx={981} cy={458.700} />
    <RoundHole cx={1068.500} cy={469} />
    <RoundHole cx={1156} cy={480} />
    <SquareHole x={936} y={501.700} />
    <SquareHole x={1023.500} y={512.700} />
    <SquareHole x={1110.700} y={523.500} />

    <NavigationCube />
    <AxisCross />
  </svg>
);

const CloseBox = ({ red = false }: { red?: boolean }) => (
  <Svg size={14} box="0 0 14 14">
    <rect x=".7" y=".7" width="12.600" height="12.600" rx="1.500" fill={red ? "#e0704c" : "#b9b9b9"} stroke={red ? "#c0401f" : "#9a9a9a"} />
    <path d="M4.500 4l5 6M9.500 4l-5 6" stroke="#fff" strokeWidth="1.900" />
  </Svg>
);

const menus: [string, string, string][] = [
  ["F", "ile", "w-[34px]"],
  ["E", "dit", "w-[36px]"],
  ["V", "iew", "w-[40px]"],
  ["T", "ools", "w-[44px]"],
  ["M", "acro", "w-[50px]"],
  ["W", "indows", "w-[65px]"],
  ["H", "elp", "w-[40px]"],
];

export default function App() {
  return (
    <div className="flex h-[995px] w-[1681px] flex-col overflow-hidden whitespace-nowrap border border-[#1c1c22] bg-[#f0f0f0] font-['Open_Sans','Noto_Sans',sans-serif] text-[11.5px] leading-4 text-black">
      <header className="flex h-[28px] shrink-0 items-center justify-between bg-white pl-[7px] pr-[18px]">
        <div className="flex items-center gap-[6px] pt-px text-[12px]">
          <FreeCadLogo />
          <span className="tracking-[-0.35px]">FreeCAD 0.19</span>
        </div>
        <div className="flex items-center gap-[35px]">
          <svg width="10" height="10" viewBox="0 0 10 10"><path d="M0 5.500H10" stroke="#000" /></svg>
          <svg width="10" height="10" viewBox="0 0 10 10"><path d="M.5 .5H9.500V9.500H.5z" stroke="#000" fill="none" /></svg>
          <svg width="11" height="11" viewBox="0 0 11 11"><path d="M.5 .5L10.500 10.500M10.500 .5L.5 10.500" stroke="#000" /></svg>
        </div>
      </header>
      <nav className="flex h-[23px] shrink-0 items-center border-b border-[#e6e6e6] bg-white pl-[7.500px] pt-[4px] text-[12px] tracking-[-0.05px]">
        {menus.map(([key, rest, width]) => (
          <span key={key + rest} className={width}>
            <u className="underline-offset-2">{key}</u>
            {rest}
          </span>
        ))}
      </nav>

      <div className="flex h-[34px] shrink-0 items-center border-b border-[#b5b5b5]">
        <div className="flex h-full w-[157px] items-center border-r border-[#b5b5b5] pl-[3px]">
          <Handle />
          <div className="ml-[3px] flex h-[22px] w-[145px] items-center border border-[#adadad] bg-[#e1e1e1] pl-[5px] pr-1">
            <svg width="15" height="14" viewBox="0 0 15 14">
              <path d="M.7 4H7.500V1L14.300 7 7.500 13V10H.7z" fill="#3a6cab" stroke="#1c3659" strokeWidth=".9" />
            </svg>
            <span className="ml-[3px] flex-1 pt-px">Start</span>
            <ChevronDown />
          </div>
        </div>
        <div className="flex h-full w-[136px] items-center border-r border-[#b5b5b5] pl-[3px]">
          <Handle />
          <span className="w-[2px]" />
          <Tool><RedCircle /></Tool>
          <Tool><GreySquare /></Tool>
          <Tool><NotePencil /></Tool>
          <Tool><Play /></Tool>
        </div>
        <div className="flex h-full items-center pl-[3px]">
          <Handle />
          <span className="w-[2px]" />
          <Tool><NewDoc /></Tool>
          <Tool><OpenDoc /></Tool>
          <Tool><SaveDoc /></Tool>
          <Tool><PrintDoc /></Tool>
          <Sep />
          <Tool><Cut /></Tool>
          <Tool><Copy /></Tool>
          <Tool><Paste /></Tool>
          <Sep />
          <Tool><Undo /></Tool>
          <Drop dim />
          <Tool><Undo flip /></Tool>
          <Drop dim />
          <Sep />
          <Tool><Reload /></Tool>
          <Sep />
          <Tool><WhatsThis /></Tool>
        </div>
      </div>

      <div className="flex h-[34px] shrink-0 items-center border-b border-[#b5b5b5]">
        <div className="flex h-full w-[574px] items-center border-r border-[#b5b5b5] pl-[3px]">
          <Handle />
          <span className="w-[2px]" />
          <Tool><FitAll /></Tool>
          <Tool><FitSelection /></Tool>
          <Tool><DrawStyle /></Tool>
          <Drop />
          <Tool active><BoxSelect /></Tool>
          <Sep />
          <Tool><ThinArrow /></Tool>
          <Tool><ThinArrow flip /></Tool>
          <Tool><LinkCube /></Tool>
          <Drop />
          <Sep />
          <Tool><SyncView /></Tool>
          <Drop />
          <Tool><IsoCube /></Tool>
          <Sep />
          <Tool><CubeFrame face={faces.front} /></Tool>
          <Tool><CubeFrame ticks face={faces.top} /></Tool>
          <Tool><CubeFrame ticks face={faces.right} /></Tool>
          <Sep />
          <Tool><CubeFrame back face={faces.rear} faceFill="#3ccfd2" /></Tool>
          <Tool><CubeFrame back face={faces.bottom} /></Tool>
          <Tool><CubeFrame back face={faces.left} faceFill="#1f9499" /></Tool>
          <Sep />
          <Tool><Ruler /></Tool>
        </div>
        <div className="flex h-full w-[148px] items-center border-r border-[#b5b5b5] pl-[3px]">
          <Handle />
          <span className="w-[2px]" />
          <Tool><PartIcon /></Tool>
          <Tool><FolderIcon /></Tool>
          <Tool><ExportIcon /></Tool>
          <Tool><ExportIcon two /></Tool>
          <Drop />
        </div>
        <div className="flex h-full items-center pl-[3px]">
          <Handle />
          <span className="w-[2px]" />
          <Tool><WebSheet /></Tool>
          <Sep />
          <Tool><Globe /></Tool>
          <Tool><FatArrow flip blue /></Tool>
          <Sep />
          <Tool><FatArrow /></Tool>
          <Tool><FatArrow flip /></Tool>
          <Tool><Reload grey /></Tool>
          <Tool><StopOct /></Tool>
          <Sep />
          <Tool><Plus /></Tool>
          <Tool><Minus /></Tool>
        </div>
      </div>

      <main className="flex h-[753px] shrink-0">
        <ComboView />
        <section className="flex flex-1 flex-col">
          <Viewport />
          <nav className="flex items-start pl-[2px]">
            <div className="flex h-[20px] w-[111px] items-center border border-t-0 border-[#d9d9d9] pl-[8px]">
              <FreeCadLogo />
              <span className="ml-[4px] mr-[5px] tracking-[-0.35px]">Start page</span>
              <CloseBox />
            </div>
            <div className="flex h-[22px] w-[232px] items-center border border-l-0 border-t-0 border-[#d9d9d9] bg-white pl-[13px]">
              <FreeCadLogo />
              <span className="ml-[4px] mr-[4px] pt-px tracking-[-0.54px]">General Alarm Device Enclosure : 1</span>
              <CloseBox red />
            </div>
          </nav>
        </section>
      </main>

      <section className="flex shrink-0 flex-col">
        <header className="flex h-[19px] items-center justify-between border border-[#bcbcbc] bg-[#d9d9d9] pl-1 pr-[7px]">
          <span className="pt-px tracking-[-0.13px]">Report view</span>
          <DockButtons />
        </header>
        <div className="mt-[2px] h-[71px] border border-[#828790] bg-white" />
      </section>

      <footer className="flex flex-1 items-center pb-[3px] pt-[4px]">
        <span className="flex-1 pl-px tracking-[-0.4px]">
          Preselected: General_Alarm_Device_Enclosure.difference016.Face4 (0.000000 in, 3.112199 in, 1.881021 in)
        </span>
        <div className="flex h-6 w-[81px] items-center border-l border-[#d0d0d0] pl-[24px]">
          <svg width="11" height="14" viewBox="0 0 11 14" fill="none">
            <rect x="1" y="1" width="9" height="12" rx="3.500" stroke="#333" strokeWidth="1.300" />
            <path d="M5.500 3.500V6" stroke="#333" strokeWidth="1.500" />
          </svg>
          <span className="ml-[3px] mr-[5px] tracking-[-0.6px]">CAD</span>
          <svg width="8" height="5" viewBox="0 0 8 5"><path d="M0 0H8L4 4.800z" fill="#111" /></svg>
        </div>
        <div className="flex h-6 w-[126px] items-center border-l border-[#d0d0d0] pl-[3px] tracking-[-0.32px]">9.40 in x 5.72 in</div>
        <div className="flex h-6 w-[19px] items-end justify-end border-l border-[#d0d0d0]">
          <svg width="11" height="9" viewBox="0 0 11 9" fill="#b9b9b9">
            <path d="M6 0h2v2H6zM3 3h2v2H3zM6 3h2v2H6zM0 6h2v2H0zM3 6h2v2H3zM6 6h2v2H6z" />
          </svg>
        </div>
      </footer>
    </div>
  );
}
